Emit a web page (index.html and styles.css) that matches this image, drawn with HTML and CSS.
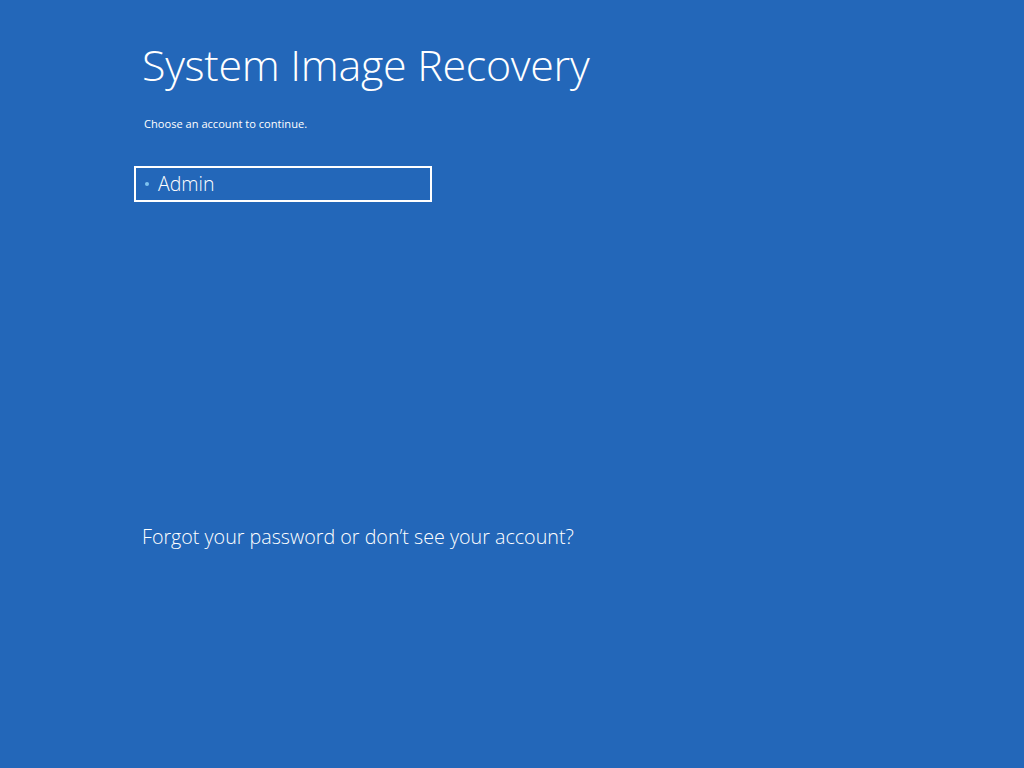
FILE: index.html
```html
<!DOCTYPE html>
<html lang="en">
<head>
<meta charset="utf-8">
<title>System Image Recovery</title>
<link rel="stylesheet" href="styles.css">
</head>
<body>
<main class="page">
  <h1 class="title">System Image Recovery</h1>
  <p class="subtitle">Choose an account to continue.</p>
  <div class="accounts">
    <div class="account selected"><span class="bullet"></span><span class="name">Admin</span></div>
  </div>
  <p class="forgot">Forgot your password or don’t see your account?</p>
</main>
</body>
</html>
```
FILE: styles.css
```css
html, body {
  margin: 0;
  padding: 0;
  background: #2367b9;
  height: 100%;
}
body {
  font-family: "Open Sans", "Noto Sans", sans-serif;
  color: #ffffff;
}
.page {
  padding: 37px 0 0 142px;
  display: flex;
  flex-direction: column;
  align-items: flex-start;
}
.title {
  margin: 0;
  font-weight: 300;
  font-size: 43px;
  line-height: 56px;
  letter-spacing: -0.3px;
}
.subtitle {
  margin: 23px 0 0 2px;
  font-size: 11.1px;
  line-height: 16px;
}
.accounts {
  margin: 34px 0 0 -8px;
}
.account {
  box-sizing: border-box;
  width: 298px;
  height: 36px;
  border: 2px solid #ffffff;
  display: flex;
  align-items: center;
  padding-left: 9px;
  gap: 9px;
}
.bullet {
  width: 4px;
  height: 4px;
  border-radius: 50%;
  background: #7fc3f0;
}
.name {
  font-size: 19.5px;
  font-weight: 300;
  line-height: 24px;
}
.forgot {
  margin: 322px 0 0 0;
  font-size: 19.7px;
  font-weight: 300;
  line-height: 26px;
}
```
